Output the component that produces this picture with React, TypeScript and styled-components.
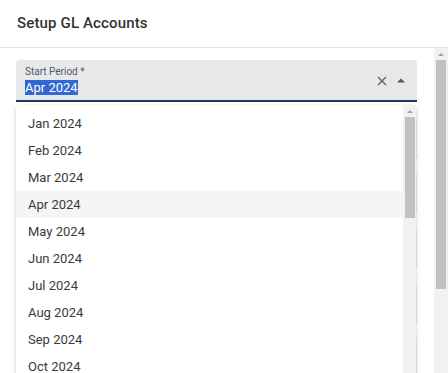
import React from "react";
import styled, { createGlobalStyle } from "styled-components";

const GlobalStyle = createGlobalStyle`
    html, body {
        margin: 0;
        padding: 0;
        background: #fff;
        overflow: hidden;
    }
    body {
        font-family: Roboto, "Liberation Sans", Arial, sans-serif;
    }
`;

const Dialog = styled.div`
    width: 448px;
    height: 373px;
    display: flex;
    flex-direction: column;
    background: #fff;
    overflow: hidden;
`;

const Header = styled.div`
    height: 47px;
    flex-shrink: 0;
    display: flex;
    align-items: center;
    padding: 0 17px;
    border-bottom: 1px solid #e2e2e2;
`;

const Title = styled.h1`
    margin: 0 0 2px;
    font-size: 15px;
    font-weight: 500;
    color: #333;
    letter-spacing: 0.15px;
`;

const Body = styled.div`
    flex: 1;
    display: flex;
    min-height: 0;
`;

const Content = styled.div`
    flex: 1;
    position: relative;
    display: flex;
    flex-direction: column;
    gap: 14px;
    padding: 12px 17px 0 16px;
    overflow: hidden;
`;

const Field = styled.div<{ $active?: boolean }>`
    height: 40px;
    flex-shrink: 0;
    display: flex;
    align-items: center;
    padding: 0 9px;
    background: ${(p) => (p.$active ? "#e8e8e8" : "#f0f0f0")};
    border-radius: 4px 4px 0 0;
    border-bottom: ${(p) => (p.$active ? "2px solid #1f3a5f" : "1px solid #cfcfcf")};
`;

const FieldText = styled.div`
    flex: 1;
    display: flex;
    flex-direction: column;
`;

const Label = styled.span`
    font-size: 10px;
    color: #4b5a6e;
    line-height: 12px;
    margin-top: 1px;
`;

const Value = styled.span`
    font-size: 13px;
    line-height: 17px;
    color: #fff;
    margin-top: 1px;
    & > span {
        background: #3168d4;
    }
`;

const Icons = styled.div`
    display: flex;
    align-items: center;
    gap: 10px;
    margin-right: 3px;
    margin-top: 1px;
`;

const Menu = styled.div`
    position: absolute;
    top: 57px;
    left: 16px;
    width: 400px;
    height: 290px;
    display: flex;
    background: #fff;
    border-radius: 4px;
    box-shadow: 0 2px 5px rgba(0, 0, 0, 0.18), 0 1px 2px rgba(0, 0, 0, 0.08);
`;

const Options = styled.ul`
    flex: 1;
    list-style: none;
    margin: 0;
    padding: 5px 0 0;
`;

const Option = styled.li<{ $hover?: boolean }>`
    height: 27px;
    display: flex;
    align-items: center;
    padding-left: 12px;
    font-size: 13px;
    color: #3a3a3a;
    background: ${(p) => (p.$hover ? "#f5f5f5" : "transparent")};
`;

const Track = styled.div<{ $width: number }>`
    width: ${(p) => p.$width}px;
    flex-shrink: 0;
    display: flex;
    flex-direction: column;
    align-items: center;
    background: #f1f1f1;
`;

const Arrow = styled.div<{ $down?: boolean }>`
    height: 12px;
    flex-shrink: 0;
    display: flex;
    align-items: center;
    justify-content: center;
    &::before {
        content: "";
        border-left: 3px solid transparent;
        border-right: 3px solid transparent;
        ${(p) => (p.$down ? "border-top: 3px solid #6f6f6f;" : "border-bottom: 3px solid #a3a3a3;")}
    }
`;

const Thumb = styled.div<{ $height: number; $width: number }>`
    width: ${(p) => p.$width}px;
    height: ${(p) => p.$height}px;
    background: #c1c1c1;
`;

const Spacer = styled.div`
    flex: 1;
`;

const months = ["Jan", "Feb", "Mar", "Apr", "May", "Jun", "Jul", "Aug", "Sep", "Oct", "Nov", "Dec"];

const App = () => {
    return (
        <>
            <GlobalStyle />
            <Dialog>
                <Header>
                    <Title>Setup GL Accounts</Title>
                </Header>
                <Body>
                    <Content>
                        <Field $active>
                            <FieldText>
                                <Label>Start Period *</Label>
                                <Value>
                                    <span>Apr 2024</span>
                                </Value>
                            </FieldText>
                            <Icons>
                                <svg width="10" height="10" viewBox="0 0 10 10">
                                    <path d="M1 1L9 9M9 1L1 9" stroke="#5f5f5f" strokeWidth="1.3" />
                                </svg>
                                <svg width="8" height="5" viewBox="0 0 8 5">
                                    <path d="M0 4.5L4 0.5L8 4.5Z" fill="#555" />
                                </svg>
                            </Icons>
                        </Field>
                        <Field />
                        <Field />
                        <Field />
                        <Field />
                        <Field />
                        <Menu>
                            <Options>
                                {months.map((m) => (
                                    <Option key={m} $hover={m === "Apr"}>
                                        {m} 2024
                                    </Option>
                                ))}
                            </Options>
                            <Track $width={13}>
                                <Arrow />
                                <Thumb $width={10} $height={101} />
                                <Spacer />
                                <Arrow $down />
                            </Track>
                        </Menu>
                    </Content>
                    <Track $width={14}>
                        <Arrow />
                        <Thumb $width={10} $height={229} />
                        <Spacer />
                    </Track>
                </Body>
            </Dialog>
        </>
    );
};

export default App;
